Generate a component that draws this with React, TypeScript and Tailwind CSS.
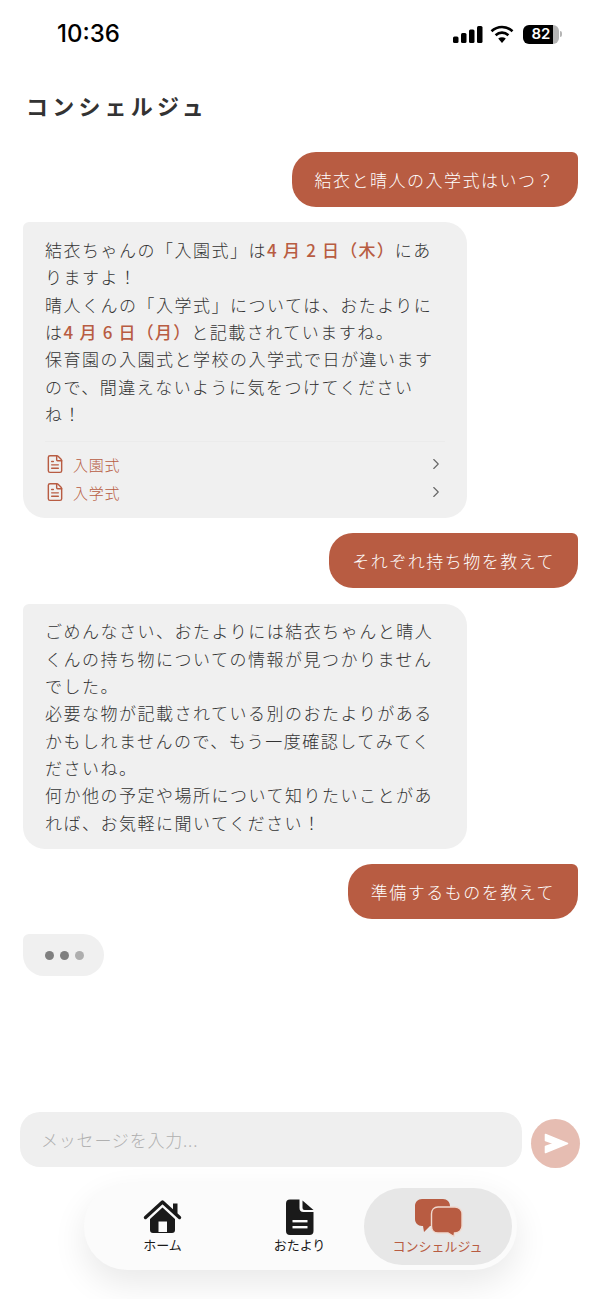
import { ChevronRight, FileText } from 'lucide-react'

const jp = "font-['Noto_Sans_CJK_JP','Noto_Sans',sans-serif]"

function Accent({ children }: { children: React.ReactNode }) {
  return <span className="font-medium tracking-[1.2px] text-[#b85c42]">{children}</span>
}

function UserBubble({ text }: { text: string }) {
  return (
    <div className="flex justify-end">
      <div className="flex h-[55px] items-center rounded-[24px] rounded-tr-[6px] bg-[#b85c42] px-[23px] text-[17px] font-light tracking-[1.5px] text-white">
        {text}
      </div>
    </div>
  )
}

function SourceLink({ label }: { label: string }) {
  return (
    <div className="flex h-[28px] items-center text-[#b85c42]">
      <FileText size={20} strokeWidth={1.7} className="mr-[8px]" />
      <span className="text-[15px] tracking-[0.8px]">{label}</span>
      <ChevronRight size={18} strokeWidth={1.5} className="ml-auto text-[#666]" />
    </div>
  )
}

function StatusBar() {
  return (
    <div className="flex h-[68px] items-center justify-between pl-[57px] pr-[38px]">
      <span className="font-['Inter',sans-serif] text-[24px] font-medium text-black">10:36</span>
      <div className="flex items-center gap-[7px]">
        <svg width="30" height="17" viewBox="0 0 30 17" fill="#000">
          <rect x="0" y="10.5" width="5.5" height="6.5" rx="1.5" />
          <rect x="8" y="7" width="5.5" height="10" rx="1.5" />
          <rect x="16" y="3.5" width="5.5" height="13.5" rx="1.5" />
          <rect x="24" y="0" width="5.5" height="17" rx="1.5" />
        </svg>
        <svg width="24" height="18" viewBox="0 0 24 18" fill="none" stroke="#000" strokeWidth="2.6">
          <path d="M1.5 6.2C7.5 0.6 16.5 0.6 22.5 6.2" />
          <path d="M5.6 10.2C9.4 6.8 14.6 6.8 18.4 10.2" />
          <path d="M12 18L8.2 13.6C10.4 11.9 13.6 11.9 15.8 13.6Z" fill="#000" stroke="none" />
        </svg>
        <div className="ml-[2px] flex items-center">
          <div className="flex h-[19px] w-[36px] items-center justify-center rounded-[6px] bg-[linear-gradient(90deg,#000_84%,#b5b5b5_84%)] font-['Inter',sans-serif] text-[15px] font-semibold text-white">
            82
          </div>
          <div className="ml-[1px] h-[6px] w-[2px] rounded-r-full bg-[#b5b5b5]" />
        </div>
      </div>
    </div>
  )
}

function HomeIcon() {
  return (
    <svg width="40" height="36" viewBox="0 0 40 36" fill="#1a1a1a">
      <path d="M2.5 18.5L19.5 3L36.5 18.5" fill="none" stroke="#1a1a1a" strokeWidth="3.4" strokeLinecap="round" strokeLinejoin="round" />
      <rect x="30" y="4.5" width="4.5" height="10" />
      <path
        fillRule="evenodd"
        d="M7 20L19.5 8.5L32 20V31A3 3 0 0 1 29 34H10A3 3 0 0 1 7 31ZM15.5 22.5V33H24V22.5Z"
      />
    </svg>
  )
}

function DocIcon() {
  return (
    <svg width="28" height="36" viewBox="0 0 28 36" fill="#1a1a1a">
      <path d="M4 0.5H13.5V9A4 4 0 0 0 17.5 13H27.5V32A4 4 0 0 1 23.5 36H4A4 4 0 0 1 0 32V4.5A4 4 0 0 1 4 0.5Z" />
      <path d="M16.5 1.5L27.5 11H18.5A2 2 0 0 1 16.5 9Z" />
      <rect x="6.5" y="21" width="15" height="2.4" fill="#fbfbfb" />
      <rect x="6.5" y="27" width="15" height="2.4" fill="#fbfbfb" />
    </svg>
  )
}

function ChatIcon() {
  return (
    <svg width="48" height="38" viewBox="0 0 48 38" fill="#b85c42">
      <path d="M7 0H28C32 0 35 3 35 7V20C35 24 32 27 28 27H15L9 33L8 27H7C3 27 0 24 0 20V7C0 3 3 0 7 0Z" />
      <path
        d="M23 8H40C44 8 47 11 47 15V27C47 31 44 34 40 34H39.5L39 37.5L33 34H23C19 34 16.5 31 16.5 27V15C16.5 11 19 8 23 8Z"
        stroke="#f0d9cf"
        strokeWidth="1.4"
      />
    </svg>
  )
}

function SendIcon() {
  return (
    <svg width="25" height="21" viewBox="0 0 25 21" fill="#fff" stroke="#fff" strokeWidth="1.6" strokeLinejoin="round">
      <path d="M1.5 1.5L23.5 10.5L1.5 19.5V13.5L10 10.5L1.5 7.5Z" />
    </svg>
  )
}

export default function App() {
  return (
    <div className={`relative flex h-[1299px] w-[600px] flex-col overflow-hidden bg-white ${jp}`}>
      <StatusBar />

      <h1 className="mt-[21px] pl-[26px] text-[22px] font-bold leading-[32px] tracking-[4.2px] text-[#333]">
        コンシェルジュ
      </h1>

      <div className="mt-[31px] flex flex-1 flex-col gap-[15px] pl-[23px] pr-[22px]">
        <UserBubble text="結衣と晴人の入学式はいつ？" />

        <div className="w-[444px] rounded-[22px] rounded-tl-[6px] bg-[#f0f0f0] px-[22px] pt-[14px] text-[17px] font-light leading-[27.35px] tracking-[1.5px] text-[#333]">
          <p>
            結衣ちゃんの「入園式」は<Accent>4 月 2 日（木）</Accent>にありますよ！
            <br />
            晴人くんの「入学式」については、おたよりには<Accent>4 月 6 日（月）</Accent>と記載されていますね。
            <br />
            保育園の入園式と学校の入学式で日が違いますので、間違えないように気をつけてくださいね！
          </p>
          <div className="mt-[14px] border-t border-[#ebebeb] pb-[12px] pt-[8px]">
            <SourceLink label="入園式" />
            <SourceLink label="入学式" />
          </div>
        </div>

        <UserBubble text="それぞれ持ち物を教えて" />

        <div className="mt-px w-[444px] rounded-[22px] rounded-tl-[6px] bg-[#f0f0f0] px-[22px] py-[13px] text-[17px] font-light leading-[27.35px] tracking-[1.5px] text-[#333]">
          ごめんなさい、おたよりには結衣ちゃんと晴人くんの持ち物についての情報が見つかりませんでした。
          <br />
          必要な物が記載されている別のおたよりがあるかもしれませんので、もう一度確認してみてくださいね。
          <br />
          何か他の予定や場所について知りたいことがあれば、お気軽に聞いてください！
        </div>

        <UserBubble text="準備するものを教えて" />

        <div className="flex h-[42px] w-[81px] items-center gap-[6px] rounded-[21px] rounded-tl-[6px] bg-[#f0f0f0] pl-[22px]">
          <span className="h-[9px] w-[9px] rounded-full bg-[#808080]" />
          <span className="h-[9px] w-[9px] rounded-full bg-[#808080]" />
          <span className="h-[9px] w-[9px] rounded-full bg-[#aeaeae]" />
        </div>
      </div>

      <div className="flex items-end gap-[9px] pl-[20px] pr-[20px]">
        <div className="flex h-[55px] flex-1 items-center rounded-[20px] bg-[#efefef] pl-[21px] text-[17px] font-light tracking-[0.8px] text-[#b0b0b0]">
          メッセージを入力...
        </div>
        <button className="-mb-[1px] flex h-[49px] w-[49px] items-center justify-center rounded-full bg-[#e6bdb2] pl-[2px]">
          <SendIcon />
        </button>
      </div>

      <div className="mx-auto mb-[29px] mt-[16px] flex h-[87px] w-[433px] items-center rounded-[43px] bg-[#fbfbfb] p-[5px] shadow-[0_14px_34px_rgba(0,0,0,0.09)]">
        <div className="flex h-full w-[132px] flex-col items-center justify-center gap-[1px] pl-[16px] text-[#1a1a1a]">
          <HomeIcon />
          <span className="text-[13px] leading-[18px]">ホーム</span>
        </div>
        <div className="flex h-full w-[143px] flex-col items-center justify-center gap-[1px] pl-[15px] text-[#1a1a1a]">
          <DocIcon />
          <span className="text-[13px] leading-[18px]">おたより</span>
        </div>
        <div className="flex h-full flex-1 flex-col items-center justify-center rounded-[38px] bg-[#e7e7e7] text-[#b85c42]">
          <span className="pl-[2px]">
            <ChatIcon />
          </span>
          <span className="text-[13px] leading-[18px]">コンシェルジュ</span>
        </div>
      </div>
    </div>
  )
}
